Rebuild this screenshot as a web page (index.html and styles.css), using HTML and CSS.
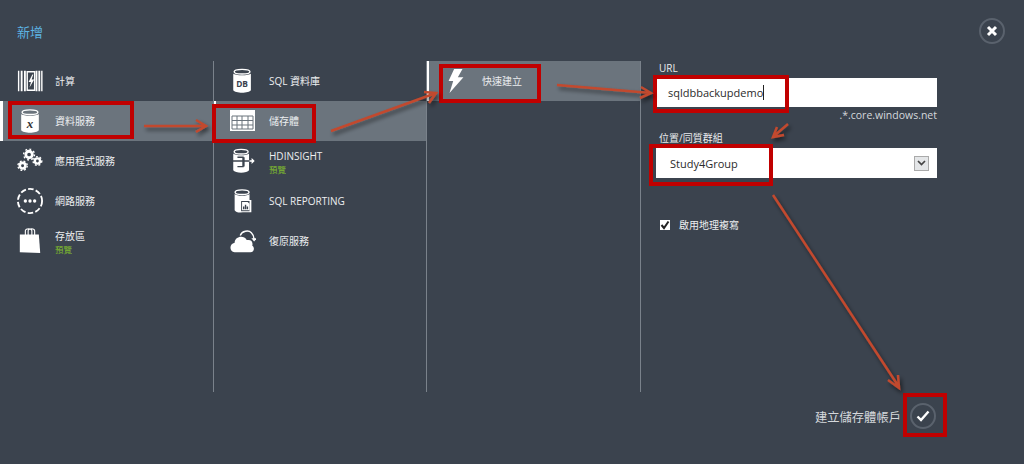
FILE: index.html
```html
<!DOCTYPE html>
<html lang="zh-Hant">
<head>
<meta charset="utf-8">
<title>新增</title>
<link rel="stylesheet" href="styles.css">
</head>
<body>
<div class="page">
  <header class="top">
    <h1 class="title">新增</h1>
    <button class="round close" aria-label="close">
      <svg width="12" height="12" viewBox="0 0 12 12"><path d="M2 2 10 10M10 2 2 10" stroke="#fff" stroke-width="3" fill="none"/></svg>
    </button>
  </header>
  <main class="cols">
    <section class="col">
      <div class="row">
        <svg class="ico" viewBox="0 0 28 28"><path fill="#fff" d="M1 3h1.500v22H1zM4 3h2v22H4zM7.500 3h2v22h-2zM20 3h2v22h-2zM23 3h2v22h-2zM26 3h1.500v22H26z"/><path fill="none" stroke="#fff" stroke-width="1.500" d="M11 4h8v20h-8z"/><path fill="#fff" d="M16.500 7 12.500 15h2.500l-1.500 6 5-8.500h-2.700L17.500 7z"/></svg>
        <span class="label">計算</span>
      </div>
      <div class="row on">
        <svg class="ico" viewBox="0 0 28 28"><ellipse cx="14" cy="4.500" rx="8.500" ry="2.500" fill="none" stroke="#fff" stroke-width="1.500"/><path fill="#fff" d="M4.500 6.500c2 2.500 17 2.500 19 0V24c-2 3.500-17 3.500-19 0z"/><text x="14" y="21" class="x-mark">x</text></svg>
        <span class="label">資料服務</span>
      </div>
      <div class="row">
        <svg class="ico" viewBox="0 0 28 28"><g fill="none" stroke="#fff"><circle cx="13" cy="7" r="3.500" stroke-width="3"/><circle cx="13" cy="7" r="5.800" stroke-width="1.600" stroke-dasharray="2 2.500"/><circle cx="22" cy="14" r="2.800" stroke-width="2.600"/><circle cx="22" cy="14" r="4.700" stroke-width="1.500" stroke-dasharray="2 2"/><circle cx="6" cy="19" r="3" stroke-width="2.800"/><circle cx="6" cy="19" r="5" stroke-width="1.500" stroke-dasharray="2 2"/></g></svg>
        <span class="label">應用程式服務</span>
      </div>
      <div class="row">
        <svg class="ico" viewBox="0 0 28 28"><circle cx="14" cy="14" r="13" fill="none" stroke="#fff" stroke-width="2" stroke-dasharray="6 2.400"/><g fill="#fff"><circle cx="9" cy="14" r="1.800"/><circle cx="14" cy="14" r="1.800"/><circle cx="19" cy="14" r="1.800"/></g></svg>
        <span class="label">網路服務</span>
      </div>
      <div class="row">
        <svg class="ico" viewBox="0 0 28 28"><path fill="#fff" d="M3 7h20.500l1.500 20-22-1z"/><path fill="none" stroke="#fff" stroke-width="1.200" d="M9 8V3c0-3 7-3 7 0v5M12 8V3c0-3 7-3 7 0v5"/></svg>
        <div class="stack"><span class="label">存放區</span><span class="preview">預覽</span></div>
      </div>
    </section>
    <section class="col">
      <div class="row">
        <svg class="ico" viewBox="0 0 28 28"><ellipse cx="13" cy="4" rx="8.500" ry="2.500" fill="none" stroke="#fff" stroke-width="1.500"/><path fill="#fff" d="M3.500 6c2 2.500 17 2.500 19 0V24c-2 3.500-17 3.500-19 0z"/><text x="13" y="20" class="db-mark">DB</text></svg>
        <span class="label">SQL 資料庫</span>
      </div>
      <div class="row on">
        <svg class="ico wide" viewBox="0 0 26 22"><path fill="#fff" d="M0 0h25v21H0z"/><path fill="none" stroke="#6b747d" d="M2 6h21v13H2zM2 10.500h21M2 15h21M7 6v13M12 6v13M18 6v13"/></svg>
        <span class="label">儲存體</span>
      </div>
      <div class="row">
        <svg class="ico" viewBox="0 0 28 28"><ellipse cx="12" cy="4" rx="7.500" ry="2.500" fill="none" stroke="#fff" stroke-width="1.500"/><path fill="#fff" d="M3.500 6c2 2.500 15 2.500 17 0v18c-2 3.500-15 3.500-17 0z"/><path stroke="#3b434e" stroke-width="1.500" fill="none" d="M2 14h20M8 10h6v10H8M15 10v10"/><path stroke="#fff" stroke-width="1.500" fill="#fff" d="M21 14h4M24 12.500l1.500 1.500-1.500 1.500z"/></svg>
        <div class="stack"><span class="label">HDINSIGHT</span><span class="preview">預覽</span></div>
      </div>
      <div class="row">
        <svg class="ico" viewBox="0 0 28 28"><ellipse cx="13" cy="4.500" rx="7.500" ry="2.500" fill="none" stroke="#fff" stroke-width="1.500"/><path fill="#fff" d="M5 6.500c2 2.500 14 2.500 16 0V13h2v13H14l-3 .5C8 26.500 6 25.500 5 24z"/><path fill="#3b434e" d="M12 14h9v11h-9z"/><path fill="#fff" d="M13 15h6l2 2v7h-8z"/><path fill="#3b434e" d="M14 20h1.500v3H14zM16 18h1.500v5H16zM18 20h1.500v3H18z"/></svg>
        <span class="label">SQL REPORTING</span>
      </div>
      <div class="row">
        <svg class="ico" viewBox="0 0 28 24"><path fill="#fff" d="M5 24c-6 0-6-9 0-10 0-7 10-9 13-3 5-1 7 2 6 6 3 2 2 7-2 7z"/><path fill="none" stroke="#fff" stroke-width="1.500" d="M11 6c2-5 9-6 12-3 2 2 3 4 3 7"/><path fill="#fff" d="M23 9h6l-3 3.500z"/></svg>
        <span class="label">復原服務</span>
      </div>
    </section>
    <section class="col">
      <div class="row on">
        <svg class="ico" viewBox="0 0 28 28"><path fill="#fff" d="M12 1h9l-5 9h6L7 27l4-13H6z"/></svg>
        <span class="label">快速建立</span>
      </div>
    </section>
    <section class="form">
      <label class="field-label">URL</label>
      <div class="input">sqldbbackupdemo<i class="caret"></i></div>
      <div class="hint">.*.core.windows.net</div>
      <label class="field-label second">位置/同質群組</label>
      <div class="input select"><span>Study4Group</span>
        <span class="drop"><svg width="9" height="6" viewBox="0 0 9 6"><path d="M1 1 4.500 4.500 8 1" fill="none" stroke="#444" stroke-width="1.700"/></svg></span>
      </div>
      <div class="check">
        <span class="box"><svg width="10" height="10" viewBox="0 0 10 10"><path d="M1.500 5 4 8 8.500 1.500" fill="none" stroke="#222" stroke-width="2"/></svg></span>
        <span class="label">啟用地理複寫</span>
      </div>
    </section>
  </main>
  <footer class="bottom">
    <span class="submit-text">建立儲存體帳戶</span>
    <button class="round" aria-label="ok">
      <svg width="14" height="12" viewBox="0 0 14 12"><path d="M1.500 6.500 5 10 12.500 1.500" fill="none" stroke="#fff" stroke-width="2.400"/></svg>
    </button>
  </footer>
  <svg class="notes" width="1024" height="464" viewBox="0 0 1024 464">
    <defs>
      <filter id="sh" x="-20%" y="-50%" width="140%" height="200%"><feDropShadow dx="2" dy="3" stdDeviation="2" flood-color="#000" flood-opacity=".55"/></filter>
    </defs>
    <g fill="none" stroke="#c00000" stroke-width="4">
      <rect x="10" y="103" width="122" height="34"/>
      <rect x="214" y="106" width="100" height="35"/>
      <rect x="441" y="66" width="98" height="35"/>
      <rect x="655" y="77" width="132" height="34"/>
      <rect x="651" y="146" width="120" height="38"/>
      <rect x="905" y="395" width="40" height="40"/>
    </g>
    <g fill="none" stroke="#c2492e" stroke-width="2.500" filter="url(#sh)">
      <path d="M144 126H206M196 120 206 126 196 132"/>
      <path d="M331 131 436 93M424 92 436 93 429 103"/>
      <path d="M557 85 651 93M641 87 651 93 640 98"/>
      <path d="M788 124 774 136M777 127 773 137 784 135"/>
      <path d="M773 195 899 387M888 380 899 388 898 375"/>
    </g>
  </svg>
</div>
</body>
</html>
```
FILE: styles.css
```css
* { box-sizing: border-box; }
html, body { margin: 0; padding: 0; }
body {
  background: #3b434e;
  font-family: "Open Sans", "Noto Sans CJK TC", sans-serif;
  color: #e8eaec;
  overflow: hidden;
}
.page {
  position: relative;
  width: 1024px;
  height: 464px;
  display: flex;
  flex-direction: column;
}
.top {
  height: 61px;
  flex: none;
  display: flex;
  justify-content: space-between;
  align-items: flex-start;
  padding: 18px 19px 0 17px;
}
.title {
  margin: 5px 0 0;
  font-size: 13px;
  line-height: 18px;
  font-weight: 400;
  color: #5db4e4;
}
.round {
  width: 26px;
  height: 26px;
  padding: 0;
  border: 2px solid #5a626d;
  border-radius: 50%;
  background: transparent;
  display: flex;
  align-items: center;
  justify-content: center;
}
.cols {
  height: 331px;
  flex: none;
  display: flex;
}
.col {
  width: 213px;
  flex: none;
  display: flex;
  flex-direction: column;
  border-right: 1px solid #7a828b;
}
.col:first-child { width: 214px; }
.col:nth-child(3) { width: 214px; }
.row {
  height: 40px;
  flex: none;
  display: flex;
  align-items: center;
  padding-left: 14px;
  border-left: 3px solid transparent;
  font-size: 10px;
}
.col + .col .row { border-left-width: 2px; }
.col:first-child .ico { margin-right: 12px; }
.row.on {
  background: #6b747d;
  border-left-color: #fff;
}
.ico {
  width: 26px;
  height: 28px;
  flex: none;
  margin-right: 13px;
}
.wide { width: 26px; height: 24px; }
.x-mark {
  font-family: "Liberation Serif", serif;
  font-style: italic;
  font-weight: 700;
  font-size: 14px;
  text-anchor: middle;
  fill: #333;
}
.db-mark {
  font-family: "Open Sans", sans-serif;
  font-weight: 700;
  font-size: 9px;
  text-anchor: middle;
  fill: #3b434e;
}
.label { font-size: 10px; line-height: 14px; color: #eceef0; }
.stack { display: flex; flex-direction: column; gap: 1px; padding-top: 1px; }
.preview { font-size: 8.500px; line-height: 11px; color: #7fba2f; }
.form {
  width: 297px;
  flex: none;
  padding-left: 15px;
  font-size: 10px;
}
.field-label {
  display: block;
  height: 17px;
  padding-left: 3px;
  font-size: 10px;
  line-height: 14px;
  color: #e8eaec;
}
.input {
  width: 281px;
  height: 29px;
  background: #fff;
  color: #2b2b2b;
  font-size: 11px;
  line-height: 29px;
  padding-left: 12px;
  display: flex;
  align-items: center;
}
.caret { width: 1px; height: 15px; background: #222; }
.hint {
  width: 281px;
  text-align: right;
  font-size: 10.500px;
  line-height: 16px;
  color: #d5d8dc;
}
.second { margin-top: 8px; }
.select {
  height: 30px;
  justify-content: space-between;
  padding: 0 8px 0 12px;
}
.select > span:first-child { padding-left: 2px; }
.drop {
  width: 15px;
  height: 15px;
  border: 1px solid #aaa;
  background: #e4e6e8;
  display: flex;
  align-items: center;
  justify-content: center;
}
.check {
  display: flex;
  align-items: center;
  margin-top: 40px;
  padding-left: 4px;
}
.box {
  width: 10px;
  height: 10px;
  background: #fff;
  margin-right: 9px;
  display: flex;
}
.bottom {
  flex: 1;
  display: flex;
  justify-content: flex-end;
  align-items: flex-start;
  padding: 11px 88px 0 0;
  gap: 9px;
}
.submit-text { font-size: 12.300px; line-height: 26px; padding-top: 2px; color: #d5d8dc; white-space: nowrap; }
.notes {
  position: absolute;
  left: 0;
  top: 0;
  pointer-events: none;
}
```
